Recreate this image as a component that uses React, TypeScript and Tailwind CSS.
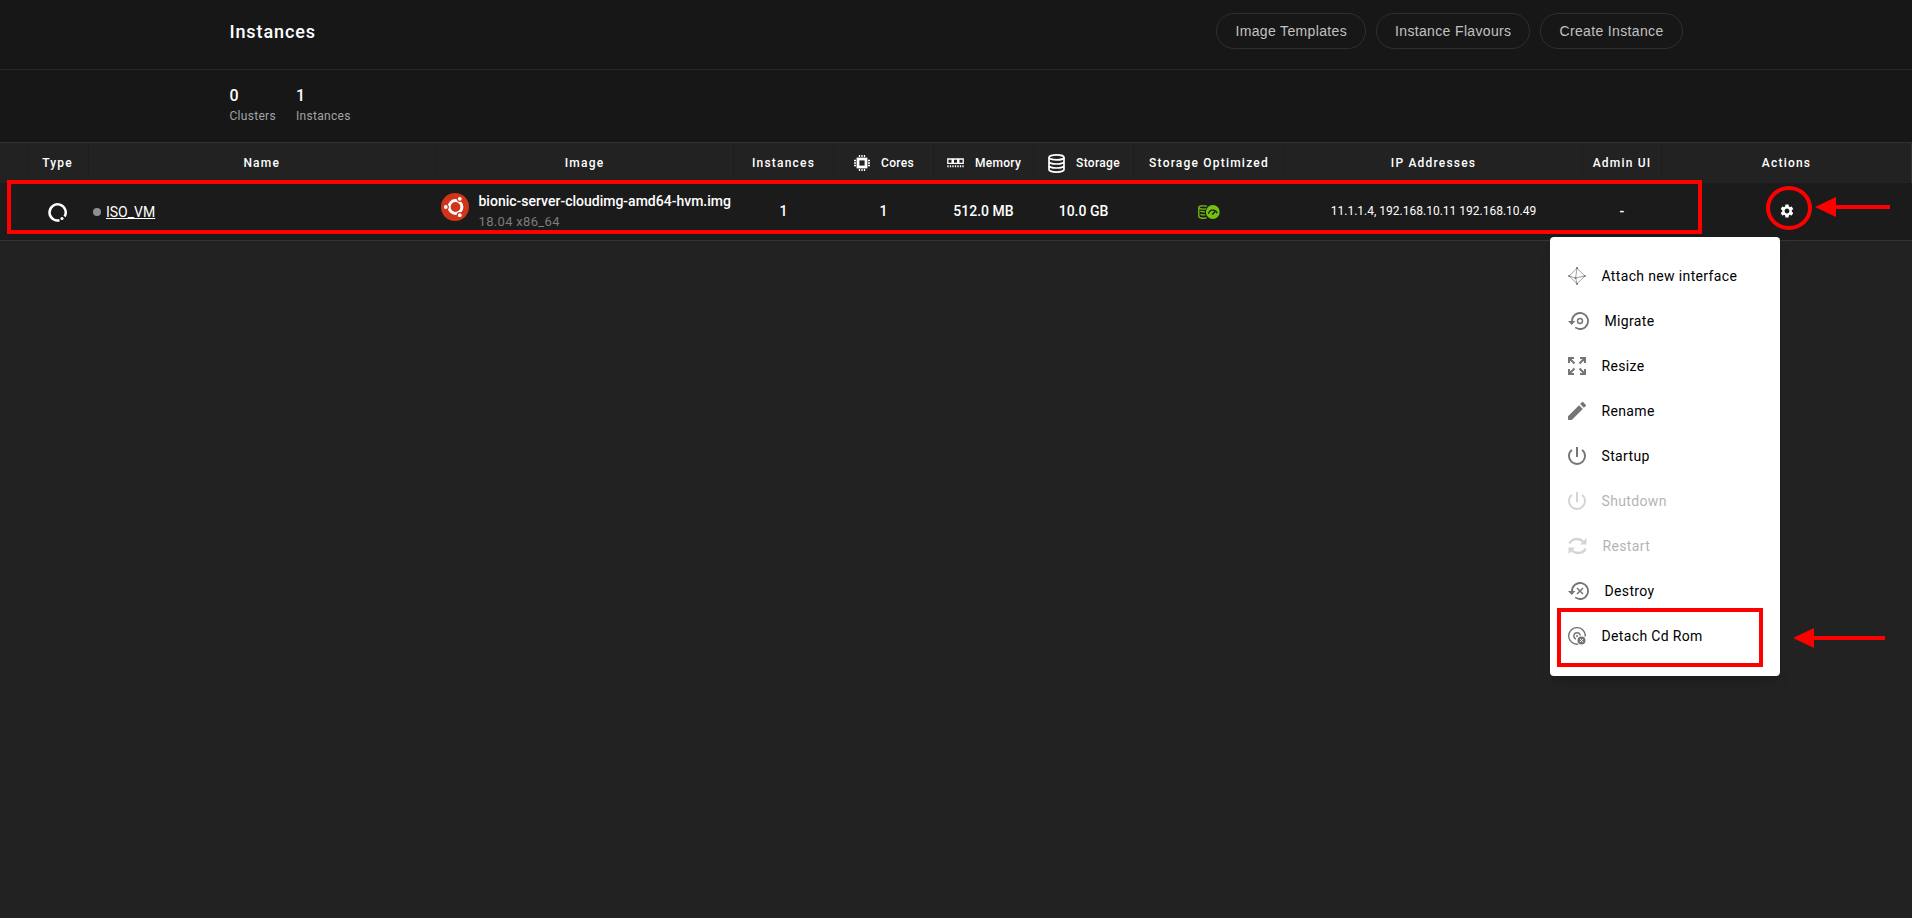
import type { ReactNode } from 'react'
import { MdSettings, MdPowerSettingsNew } from 'react-icons/md'

const COUNTERS = [
  { label: 'Clusters', value: 0 },
  { label: 'Instances', value: 1 },
]

const TOP_ACTIONS = ['Image Templates', 'Instance Flavours', 'Create Instance']

function ChipIcon() {
  return (
    <svg width="16" height="16" viewBox="0 0 16 16" fill="none" stroke="#fff" aria-hidden="true">
      <rect x="4" y="4" width="8" height="8" strokeWidth="2.8" />
      <path d="M5.5 0v2M8 0v2M10.5 0v2M5.5 14V16M8 14V16M10.5 14V16M0 5.5h2M0 8h2M0 10.5h2M14 5.5H16M14 8H16M14 10.5H16" strokeWidth="1.3" />
    </svg>
  )
}

function MemoryIcon() {
  return (
    <svg width="17" height="10" viewBox="0 0 17 10" fill="none" stroke="#fff" aria-hidden="true">
      <path d="M.8 1h4.400v4.400H.8zM6.300 1h4.400v4.400H6.300zM11.800 1h4.400v4.400h-4.400z" strokeWidth="1.300" />
      <path d="M1 7.200v2M3.500 7.200v2M6 7.200v2M8.500 7.200v2M11 7.200v2M13.500 7.200v2M16 7.200v2" strokeWidth="1.300" />
    </svg>
  )
}

function StorageIcon() {
  return (
    <svg width="17" height="19" viewBox="0 0 17 19" fill="none" stroke="#fff" strokeWidth="1.700" aria-hidden="true">
      <ellipse cx="8.500" cy="3.400" rx="7.500" ry="2.500" />
      <path d="M1 3.400v12.200c0 1.400 3.400 2.500 7.500 2.500s7.500-1.100 7.500-2.500V3.400M1 7.500c0 1.400 3.400 2.500 7.500 2.500S16 8.900 16 7.500M1 11.500c0 1.400 3.400 2.500 7.500 2.500s7.500-1.100 7.500-2.500" />
    </svg>
  )
}

function OptimizedIcon() {
  return (
    <svg width="22" height="14" viewBox="0 0 22 14" fill="none" role="img" aria-label="Optimized">
      <g stroke="#74c20c" strokeWidth="1.300">
        <path d="M9 1.200C5 .3.800 1 .8 2.600v8.800c0 1.500 4 2.300 8 1.500" />
        <path d="M1 3c1.500 1.200 4.500 1.400 7 .9M2.500 6.200c1.300.6 3 .7 4.500.6M2.500 9.300c1.300.6 3 .7 4.800.6" />
      </g>
      <circle cx="14.800" cy="7" r="6.900" fill="#74c20c" />
      <path d="M10.500 8.800a4.500 4.500 0 0 1 8.700-.6" stroke="#1b1b1b" strokeWidth="1.200" />
      <path d="M14.200 9.500l3-3" stroke="#1b1b1b" strokeWidth="1.600" />
    </svg>
  )
}

function InstanceIcon() {
  return (
    <svg width="19" height="19" viewBox="0 0 19 19" fill="none" role="img" aria-label="Single instance">
      <path d="M11.500 17.300A8.100 8.100 0 1 1 16.600 13.500" stroke="#fff" strokeWidth="2.500" />
      <circle cx="14" cy="15.500" r="1.600" fill="#fff" />
    </svg>
  )
}

function UbuntuIcon() {
  return (
    <svg width="28" height="28" viewBox="0 0 28 28" fill="none" role="img" aria-label="Ubuntu">
      <circle cx="14" cy="14" r="14" fill="#d0351a" />
      <circle cx="14.500" cy="14" r="6.400" stroke="#fff" strokeWidth="3" />
      <g fill="#fff" stroke="#d0351a" strokeWidth="1.200">
        <circle cx="4.800" cy="14" r="2.500" />
        <circle cx="18.800" cy="5.800" r="2.500" />
        <circle cx="18.800" cy="22.200" r="2.500" />
      </g>
    </svg>
  )
}

function InterfaceIcon() {
  return (
    <svg width="18" height="18" viewBox="0 0 18 18" fill="none" aria-hidden="true">
      <path d="M9 1.200L16.800 9 9 16.800 1.200 9zM9 1.200L7.600 11 9 16.800M1.200 9l6.400 2 9.200-2" stroke="#8a8a8a" strokeWidth=".8" />
      <g fill="#777">
        <circle cx="9" cy="1.200" r="1.100" />
        <circle cx="16.800" cy="9" r="1.100" />
        <circle cx="9" cy="16.800" r="1.100" />
        <circle cx="1.200" cy="9" r="1.100" />
        <circle cx="7.600" cy="11" r="1.100" />
      </g>
    </svg>
  )
}

// Counter-clockwise arrow shared by Migrate and Destroy
function HistoryIcon({ children }: { children: ReactNode }) {
  return (
    <svg width="21" height="18" viewBox="0 0 21 18" fill="none" stroke="#757575" aria-hidden="true">
      <path d="M4 9.500V9a8 8 0 1 1 3.200 6.400" strokeWidth="1.800" />
      <path d="M0 9h7.400L3.700 13z" fill="#757575" stroke="none" />
      {children}
    </svg>
  )
}

function ResizeIcon() {
  return (
    <svg width="18" height="18" viewBox="0 0 18 18" fill="none" stroke="#757575" strokeWidth="2" aria-hidden="true">
      <path d="M1 6V1h5M12 1h5v5M17 12v5h-5M6 17H1v-5M1 1l5.500 5.500M17 1l-5.500 5.500M17 17l-5.500-5.500M1 17l5.500-5.500" />
    </svg>
  )
}

function PencilIcon() {
  return (
    <svg width="18" height="18" viewBox="3 3 18 18" fill="#757575" aria-hidden="true">
      <path d="M3 17.250V21h3.750L17.810 9.940l-3.750-3.750L3 17.250zM20.710 7.040a1 1 0 0 0 0-1.410l-2.340-2.340a1 1 0 0 0-1.410 0l-1.830 1.830 3.750 3.750 1.830-1.830z" />
    </svg>
  )
}

function PowerIcon() {
  return <MdPowerSettingsNew className="h-[18px] w-[18px]" viewBox="3 3 18 18" color="#757575" />
}

function RestartIcon() {
  return (
    <svg width="19" height="18" viewBox="0 0 19 18" fill="none" stroke="#757575" strokeWidth="2.400" aria-hidden="true">
      <path d="M1.500 6.500C3.500 1.500 11 .2 15.500 5M17.500 11.500C15.500 16.500 8 17.800 3.500 13" />
      <path d="M18.500 1v6.500H12zM.5 17v-6.500H7z" fill="#757575" stroke="none" />
    </svg>
  )
}

function DiscIcon() {
  return (
    <svg width="18" height="18" viewBox="0 0 18 18" fill="none" stroke="#757575" aria-hidden="true">
      <path d="M10 17.200A8.300 8.300 0 1 1 17.300 9.500" strokeWidth="1.400" />
      <path d="M8 12A3.200 3.200 0 1 1 12.200 8.500" strokeWidth="1.400" />
      <circle cx="9" cy="9" r="1" fill="#757575" stroke="none" />
      <circle cx="13.500" cy="13.500" r="4" fill="#757575" stroke="none" />
      <path d="M12 12l3 3M15 12l-3 3" stroke="#fff" strokeWidth=".9" />
    </svg>
  )
}

type MenuItem = { label: string; icon: ReactNode; disabled?: boolean }

const MENU: MenuItem[] = [
  { label: 'Attach new interface', icon: <InterfaceIcon /> },
  {
    label: 'Migrate',
    icon: (
      <HistoryIcon>
        <circle cx="12" cy="9" r="2.500" strokeWidth="1.400" />
      </HistoryIcon>
    ),
  },
  { label: 'Resize', icon: <ResizeIcon /> },
  { label: 'Rename', icon: <PencilIcon /> },
  { label: 'Startup', icon: <PowerIcon /> },
  { label: 'Shutdown', icon: <PowerIcon />, disabled: true },
  { label: 'Restart', icon: <RestartIcon />, disabled: true },
  {
    label: 'Destroy',
    icon: (
      <HistoryIcon>
        <path d="M9 6l6 6M15 6l-6 6" strokeWidth="1.500" />
      </HistoryIcon>
    ),
  },
]

function Arrow({ length, className }: { length: number; className: string }) {
  return (
    <svg className={className} width={length} height="20" viewBox={`0 0 ${length} 20`} fill="#f00" aria-hidden="true">
      <path d={`M0 10L21 0v8H${length}v4H21v8z`} />
    </svg>
  )
}

function MenuButton({ label, icon, disabled }: MenuItem) {
  return (
    <button
      type="button"
      disabled={disabled}
      className="flex h-[45px] w-full items-center gap-4 px-[18px] text-left text-sm font-normal tracking-wide text-black disabled:opacity-30"
    >
      {icon}
      {label}
    </button>
  )
}

function ActionsMenu() {
  return (
    <div className="absolute top-[34px] right-[15px] z-20 w-[230px] rounded bg-white py-[17px] shadow-lg">
      {MENU.map((item) => (
        <MenuButton key={item.label} {...item} />
      ))}
      <div className="relative">
        <MenuButton label="Detach Cd Rom" icon={<DiscIcon />} />
        <div className="pointer-events-none absolute -top-[6px] left-[7px] h-[59px] w-[206px] border-4 border-[#f00]" />
        <Arrow length={92} className="absolute top-[14px] left-[243px]" />
      </div>
    </div>
  )
}

function Th({ children, icon }: { children?: ReactNode; icon?: ReactNode }) {
  if (icon) {
    return (
      <th className="border-r border-[#1e1e1e] p-0 font-medium">
        <div className="flex items-center justify-center gap-[11px] pl-px tracking-wide">
          {icon}
          {children}
        </div>
      </th>
    )
  }
  return <th className="border-r border-[#1e1e1e] p-0 font-medium tracking-widest last:border-[#333]">{children}</th>
}

export default function App() {
  return (
    <div className="min-h-screen bg-[#222] font-[Roboto,sans-serif] text-white">
      <header className="bg-[#171717]">
        <div className="flex h-[70px] items-start justify-between border-b border-[#262626] px-[12%] pt-[13px]">
          <h1 className="text-lg leading-[38px] font-medium tracking-wider">Instances</h1>
          <div className="flex gap-[10px] font-['Liberation_Sans',sans-serif]">
            {TOP_ACTIONS.map((label) => (
              <button
                key={label}
                type="button"
                className="h-9 rounded-full border border-[#2f2f2f] px-[18px] text-sm tracking-wide text-[#c2c2c2]"
              >
                {label}
              </button>
            ))}
          </div>
        </div>
        <dl className="flex h-[72px] gap-5 px-[12%] pt-[15px]">
          {COUNTERS.map((c) => (
            <div key={c.label} className="flex flex-col-reverse justify-end">
              <dt className="text-xs leading-[18px] tracking-wide text-[#a3a3a3]">{c.label}</dt>
              <dd className="text-base leading-[22px] font-medium">{c.value}</dd>
            </div>
          ))}
        </dl>
      </header>

      <main className="relative border-y border-[#333]">
        <table className="w-full table-fixed border-collapse text-center">
          <colgroup>
            <col className="w-[27px]" />
            <col className="w-[61px]" />
            <col />
            <col className="w-[298px]" />
            <col className="w-[100px]" />
            <col className="w-[100px]" />
            <col className="w-[100px]" />
            <col className="w-[100px]" />
            <col className="w-[151px]" />
            <col className="w-[298px]" />
            <col className="w-[79px]" />
            <col className="w-[250px]" />
          </colgroup>
          <thead>
            <tr className="h-10 bg-[#222] text-xs">
              <Th />
              <Th>Type</Th>
              <Th>Name</Th>
              <Th>Image</Th>
              <Th>Instances</Th>
              <Th icon={<ChipIcon />}>Cores</Th>
              <Th icon={<MemoryIcon />}>Memory</Th>
              <Th icon={<StorageIcon />}>Storage</Th>
              <Th>Storage Optimized</Th>
              <Th>IP Addresses</Th>
              <Th>Admin UI</Th>
              <Th>Actions</Th>
            </tr>
          </thead>
          <tbody>
            <tr className="h-[57px] bg-[#1b1b1b] text-sm font-medium">
              <td />
              <td className="pt-0.5">
                <div className="flex justify-center">
                  <InstanceIcon />
                </div>
              </td>
              <td className="p-0">
                <div className="flex items-center gap-[5px] pl-[5px]">
                  <span className="h-2 w-2 rounded-full bg-[#8f8f8f]" />
                  <a href="#iso-vm" className="font-normal underline">
                    ISO_VM
                  </a>
                </div>
              </td>
              <td className="p-0">
                <div className="flex items-start gap-[10px] pl-[5px] text-left">
                  <div className="pt-0.5">
                    <UbuntuIcon />
                  </div>
                  <div>
                    <div className="leading-5">bionic-server-cloudimg-amd64-hvm.img</div>
                    <div className="text-[13px] leading-[22px] font-normal tracking-wide text-[#7d7d7d]">18.04 x86_64</div>
                  </div>
                </div>
              </td>
              <td className="pb-0.5">1</td>
              <td className="pb-0.5">1</td>
              <td className="pb-0.5">512.0 MB</td>
              <td className="pb-0.5">10.0 GB</td>
              <td className="p-0">
                <div className="flex justify-center">
                  <OptimizedIcon />
                </div>
              </td>
              <td className="pb-0.5 text-xs font-normal">11.1.1.4, 192.168.10.11 192.168.10.49</td>
              <td className="pb-0.5">-</td>
              <td className="pb-0.5">
                <div className="relative mx-auto w-4">
                  <button type="button" aria-label="Instance actions" className="block">
                    <MdSettings size={16} />
                  </button>
                  <div className="pointer-events-none absolute -top-[17px] -left-[13px] h-11 w-[46px] rounded-[50%] border-4 border-[#f00]" />
                  <Arrow length={75} className="absolute -top-[6px] left-9" />
                  <ActionsMenu />
                </div>
              </td>
            </tr>
          </tbody>
        </table>
        <div className="pointer-events-none absolute top-[37px] right-[210px] left-[7px] h-[54px] border-4 border-[#f00]" />
      </main>
    </div>
  )
}
